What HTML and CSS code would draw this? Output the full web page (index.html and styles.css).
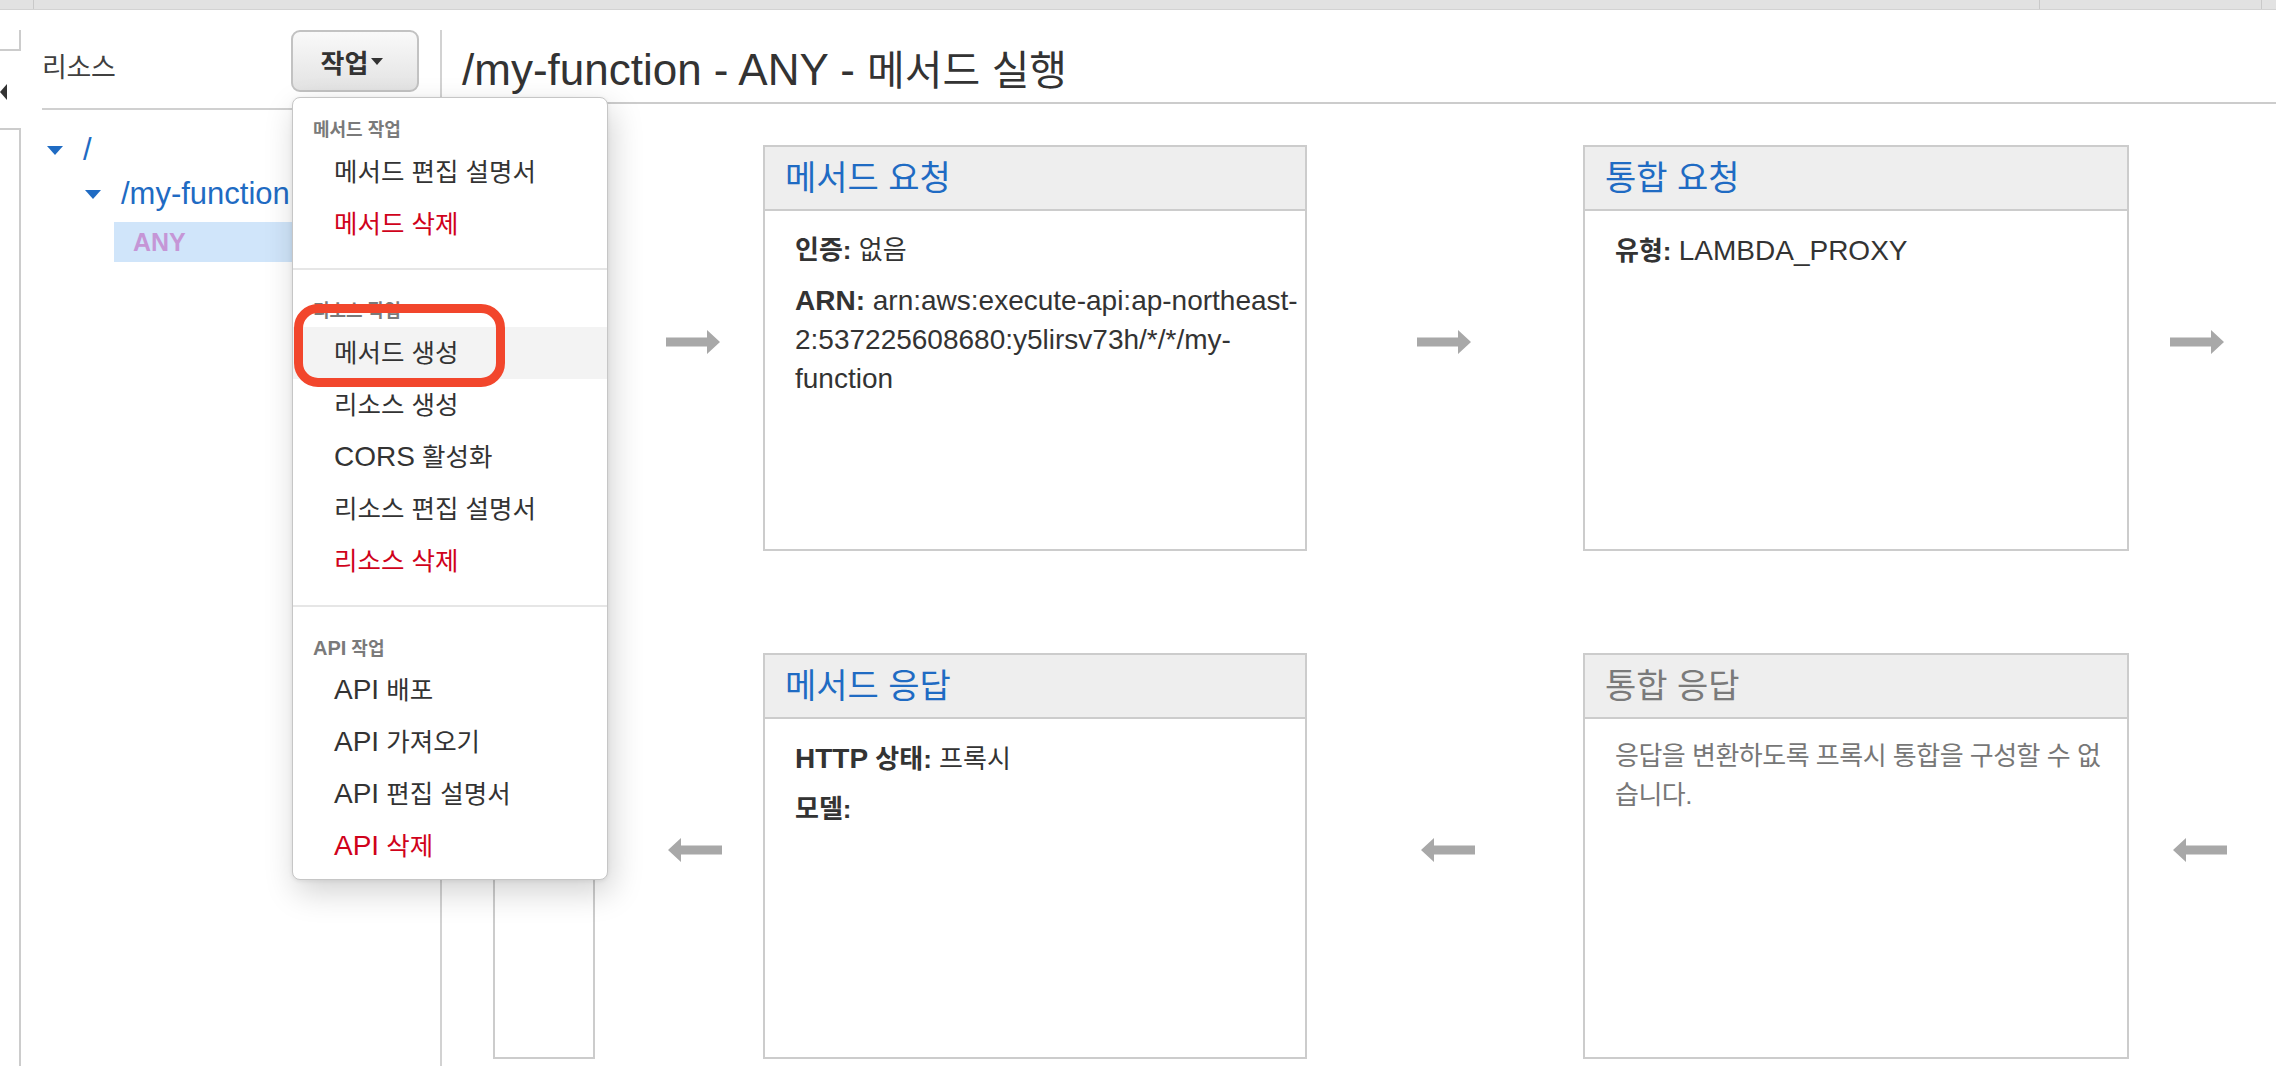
FILE: index.html
```html
<!DOCTYPE html>
<html lang="ko">
<head>
<meta charset="utf-8">
<title>/my-function - ANY - 메서드 실행</title>
<link rel="stylesheet" href="styles.css">
</head>
<body>
<div class="topbar">
  <span class="seg seg-a"></span><span class="seg seg-b"></span><span class="seg seg-c"></span><span class="seg seg-d"></span>
</div>
<div class="workspace">
  <aside class="rail">
    <div class="rail-tab"></div>
    <div class="rail-toggle"></div>
    <div class="rail-body"></div>
  </aside>

  <section class="sidebar">
    <div class="sidebar-head">
      <h2 class="sidebar-title">리소스</h2>
      <div class="actions">
        <button class="btn" type="button">작업<span class="caret"></span></button>
        <div class="menu">
          <div class="menu-section">
            <div class="menu-header">메서드 작업</div>
            <div class="menu-item">메서드 편집 설명서</div>
            <div class="menu-item danger">메서드 삭제</div>
          </div>
          <div class="menu-section">
            <div class="menu-header">리소스 작업</div>
            <div class="menu-item hover">메서드 생성<span class="callout"></span></div>
            <div class="menu-item">리소스 생성</div>
            <div class="menu-item"><span class="en">CORS</span> 활성화</div>
            <div class="menu-item">리소스 편집 설명서</div>
            <div class="menu-item danger">리소스 삭제</div>
          </div>
          <div class="menu-section">
            <div class="menu-header"><span class="en">API</span> 작업</div>
            <div class="menu-item"><span class="en">API</span> 배포</div>
            <div class="menu-item"><span class="en">API</span> 가져오기</div>
            <div class="menu-item"><span class="en">API</span> 편집 설명서</div>
            <div class="menu-item danger"><span class="en">API</span> 삭제</div>
          </div>
        </div>
      </div>
    </div>
    <ul class="tree">
      <li class="node"><span class="twisty"></span><span class="node-name">/</span></li>
      <li class="node child"><span class="twisty"></span><span class="node-name">/my-function</span></li>
      <li class="method">ANY</li>
    </ul>
  </section>

  <main class="main">
    <h1 class="page-title"><span class="en">/my-function - ANY - </span>메서드 실행</h1>
    <div class="diagram">
      <div class="client"></div>

      <div class="arrow c2 r1"><svg viewBox="0 0 54 24" width="54" height="24"><path d="M0 7.5H41V0L54 12L41 24V16.5H0Z"/></svg></div>
      <div class="stage c3 r1">
        <h3 class="stage-title">메서드 요청</h3>
        <div class="stage-body">
          <p><b>인증:</b> 없음</p>
          <p class="en nowrap"><b>ARN:</b> arn:aws:execute-api:ap-northeast-<br>2:537225608680:y5lirsv73h/*/*/my-<br>function</p>
        </div>
      </div>
      <div class="arrow c4 r1"><svg viewBox="0 0 54 24" width="54" height="24"><path d="M0 7.5H41V0L54 12L41 24V16.5H0Z"/></svg></div>
      <div class="stage c5 r1">
        <h3 class="stage-title">통합 요청</h3>
        <div class="stage-body">
          <p><b>유형:</b> <span class="en">LAMBDA_PROXY</span></p>
        </div>
      </div>
      <div class="arrow c6 r1"><svg viewBox="0 0 54 24" width="54" height="24"><path d="M0 7.5H41V0L54 12L41 24V16.5H0Z"/></svg></div>

      <div class="arrow c2 r3 back"><svg viewBox="0 0 54 24" width="54" height="24"><path d="M54 7.5H13V0L0 12L13 24V16.5H54Z"/></svg></div>
      <div class="stage c3 r3">
        <h3 class="stage-title">메서드 응답</h3>
        <div class="stage-body">
          <p><b><span class="en">HTTP</span> 상태:</b> 프록시</p>
          <p><b>모델:</b></p>
        </div>
      </div>
      <div class="arrow c4 r3 back"><svg viewBox="0 0 54 24" width="54" height="24"><path d="M54 7.5H13V0L0 12L13 24V16.5H54Z"/></svg></div>
      <div class="stage c5 r3 muted">
        <h3 class="stage-title">통합 응답</h3>
        <div class="stage-body">
          <p class="nowrap tight">응답을 변환하도록 프록시 통합을 구성할 수 없<br>습니다.</p>
        </div>
      </div>
      <div class="arrow c6 r3 back"><svg viewBox="0 0 54 24" width="54" height="24"><path d="M54 7.5H13V0L0 12L13 24V16.5H54Z"/></svg></div>
    </div>
  </main>
</div>
</body>
</html>
```

FILE: styles.css
```css
* { box-sizing: border-box; }

html, body { margin: 0; padding: 0; }

body {
  width: 2276px;
  height: 1066px;
  overflow: hidden;
  background: #ffffff;
  color: #333333;
  font-family: "Liberation Sans", "Noto Sans CJK KR", sans-serif;
}

/* top strip */
.topbar {
  display: flex;
  height: 10px;
  background: #e2e2e2;
  border-bottom: 1px solid #d3d3d3;
}
.seg { height: 100%; border-right: 1px solid #c9c9c9; }
.seg-a { width: 34px; }
.seg-b { width: 2006px; }
.seg-c { width: 222px; }
.seg-d { flex: 1; border-right: 0; }

.workspace {
  display: flex;
  height: 1056px;
}

/* collapsed left rail */
.rail {
  width: 21px;
  display: flex;
  flex-direction: column;
  flex-shrink: 0;
}
.rail-tab {
  margin-top: 20px;
  height: 21px;
  border-right: 2px solid #cccccc;
  border-bottom: 2px solid #cccccc;
}
.rail-toggle {
  margin-top: 33px;
  width: 0;
  height: 0;
  border-top: 8px solid transparent;
  border-bottom: 8px solid transparent;
  border-right: 7px solid #333333;
}
.rail-body {
  margin-top: 28px;
  flex: 1;
  border-top: 2px solid #cccccc;
  border-right: 2px solid #cccccc;
}

/* resources sidebar */
.sidebar {
  width: 421px;
  flex-shrink: 0;
  margin-top: 20px;
  padding: 0 21px;
  border-right: 2px solid #d2d2d2;
}
.sidebar-head {
  display: flex;
  justify-content: space-between;
  align-items: flex-start;
  height: 80px;
  border-bottom: 2px solid #d0d0d0;
}
.sidebar-title {
  margin: 0;
  font-size: 27px;
  font-weight: 400;
  letter-spacing: -0.3px;
  line-height: 76px;
  color: #404040;
}
.actions { position: relative; }

.btn {
  display: flex;
  align-items: center;
  justify-content: center;
  width: 128px;
  height: 62px;
  padding: 0 6px 0 0;
  border: 2px solid #c2c2c2;
  border-radius: 9px;
  background: linear-gradient(#f9f9f9, #e3e3e3);
  color: #333333;
  font-family: "Liberation Sans", "Noto Sans CJK KR", sans-serif;
  font-size: 26px;
  font-weight: 700;
}
.caret {
  width: 0;
  height: 0;
  margin-left: 3px;
  border-left: 6px solid transparent;
  border-right: 6px solid transparent;
  border-top: 7px solid #333333;
}

/* dropdown menu */
.menu {
  position: absolute;
  left: 1px;
  top: 67px;
  z-index: 10;
  width: 316px;
  background: #ffffff;
  border: 1px solid #c6c6c6;
  border-radius: 8px;
  box-shadow: 4px 12px 32px rgba(0, 0, 0, 0.18), 0 1px 4px rgba(0, 0, 0, 0.08);
}
.menu-section {
  padding: 28px 0 18px;
  border-top: 2px solid #e6e6e6;
}
.menu-section:first-child {
  padding-top: 19px;
  border-top: 0;
}
.menu-section:last-child { padding-bottom: 7px; }

.menu-header {
  height: 26px;
  line-height: 26px;
  margin-bottom: 3px;
  padding-left: 20px;
  font-size: 18px;
  font-weight: 700;
  color: #7a7a7a;
}
.menu-header .en { font-size: 20px; }

.menu-item {
  position: relative;
  height: 52px;
  line-height: 52px;
  padding-left: 41px;
  font-size: 25.5px;
  color: #333333;
  white-space: nowrap;
}
.menu-item .en { font-size: 28px; }
.menu-item.danger { color: #d0021b; }
.menu-item.hover { background: #f3f3f3; }

.callout {
  position: absolute;
  left: 1px;
  top: -23px;
  width: 211px;
  height: 83px;
  border: 9px solid #f2462c;
  border-radius: 24px;
  pointer-events: none;
}

/* resource tree */
.tree {
  list-style: none;
  margin: 0;
  padding: 18px 0 0;
}
.node {
  display: flex;
  align-items: center;
  height: 44px;
  font-size: 31px;
  color: #1f6bc3;
  white-space: nowrap;
}
.node.child { padding-left: 38px; }
.twisty {
  width: 0;
  height: 0;
  margin: 0 20px 0 5px;
  border-left: 8.5px solid transparent;
  border-right: 8.5px solid transparent;
  border-top: 9px solid #1f6bc3;
}
.method {
  margin: 6px 0 0 72px;
  height: 40px;
  line-height: 40px;
  padding-left: 19px;
  background: #d0e5fa;
  color: #c596d6;
  font-size: 25px;
  font-weight: 700;
}

/* main area */
.main {
  flex: 1;
  min-width: 0;
  margin-top: 20px;
}
.page-title {
  margin: 0;
  height: 74px;
  padding: 8px 0 0 20px;
  border-bottom: 2px solid #cccccc;
  font-size: 41px;
  font-weight: 400;
  line-height: 64px;
  color: #333333;
  white-space: nowrap;
}
.page-title .en { font-size: 44px; }

.diagram {
  display: grid;
  grid-template-columns: 102px 168px 544px 276px 546px 1fr;
  grid-template-rows: 406px 102px 406px;
  margin: 41px 0 0 51px;
}
.client {
  grid-column: 1;
  grid-row: 1 / 4;
  border: 2px solid #cccccc;
  background: #ffffff;
}

.c2 { grid-column: 2; }
.c3 { grid-column: 3; }
.c4 { grid-column: 4; }
.c5 { grid-column: 5; }
.c6 { grid-column: 6; }
.r1 { grid-row: 1; }
.r3 { grid-row: 3; }

.arrow {
  align-self: start;
  justify-self: start;
  margin-top: 185px;
  height: 24px;
  line-height: 0;
}
.arrow svg { display: block; fill: #a8a8a8; }
.arrow.c2 { margin-left: 71px; }
.arrow.c4 { margin-left: 110px; }
.arrow.c6 { margin-left: 41px; }
.arrow.back.c2 { margin-left: 73px; }
.arrow.back.c4 { margin-left: 114px; }
.arrow.back.c6 { margin-left: 44px; }

.stage {
  border: 2px solid #cccccc;
  background: #ffffff;
}
.stage-title {
  margin: 0;
  height: 64px;
  padding-left: 20px;
  border-bottom: 2px solid #cccccc;
  background: #eeeeee;
  font-size: 34px;
  font-weight: 400;
  line-height: 62px;
  color: #1f6bc3;
}
.stage-body {
  padding: 20px 0 0 30px;
  font-size: 26px;
  line-height: 39px;
  color: #333333;
}
.stage-body p { margin: 0 0 11px; }
.stage-body .en { font-size: 28px; }
.stage-body p.en { font-size: 28px; }
.nowrap { white-space: nowrap; }
.tight { letter-spacing: -0.5px; }

.stage.muted .stage-title { color: #7a7a7a; }
.stage.muted .stage-body { color: #777777; padding-top: 18px; }
```
